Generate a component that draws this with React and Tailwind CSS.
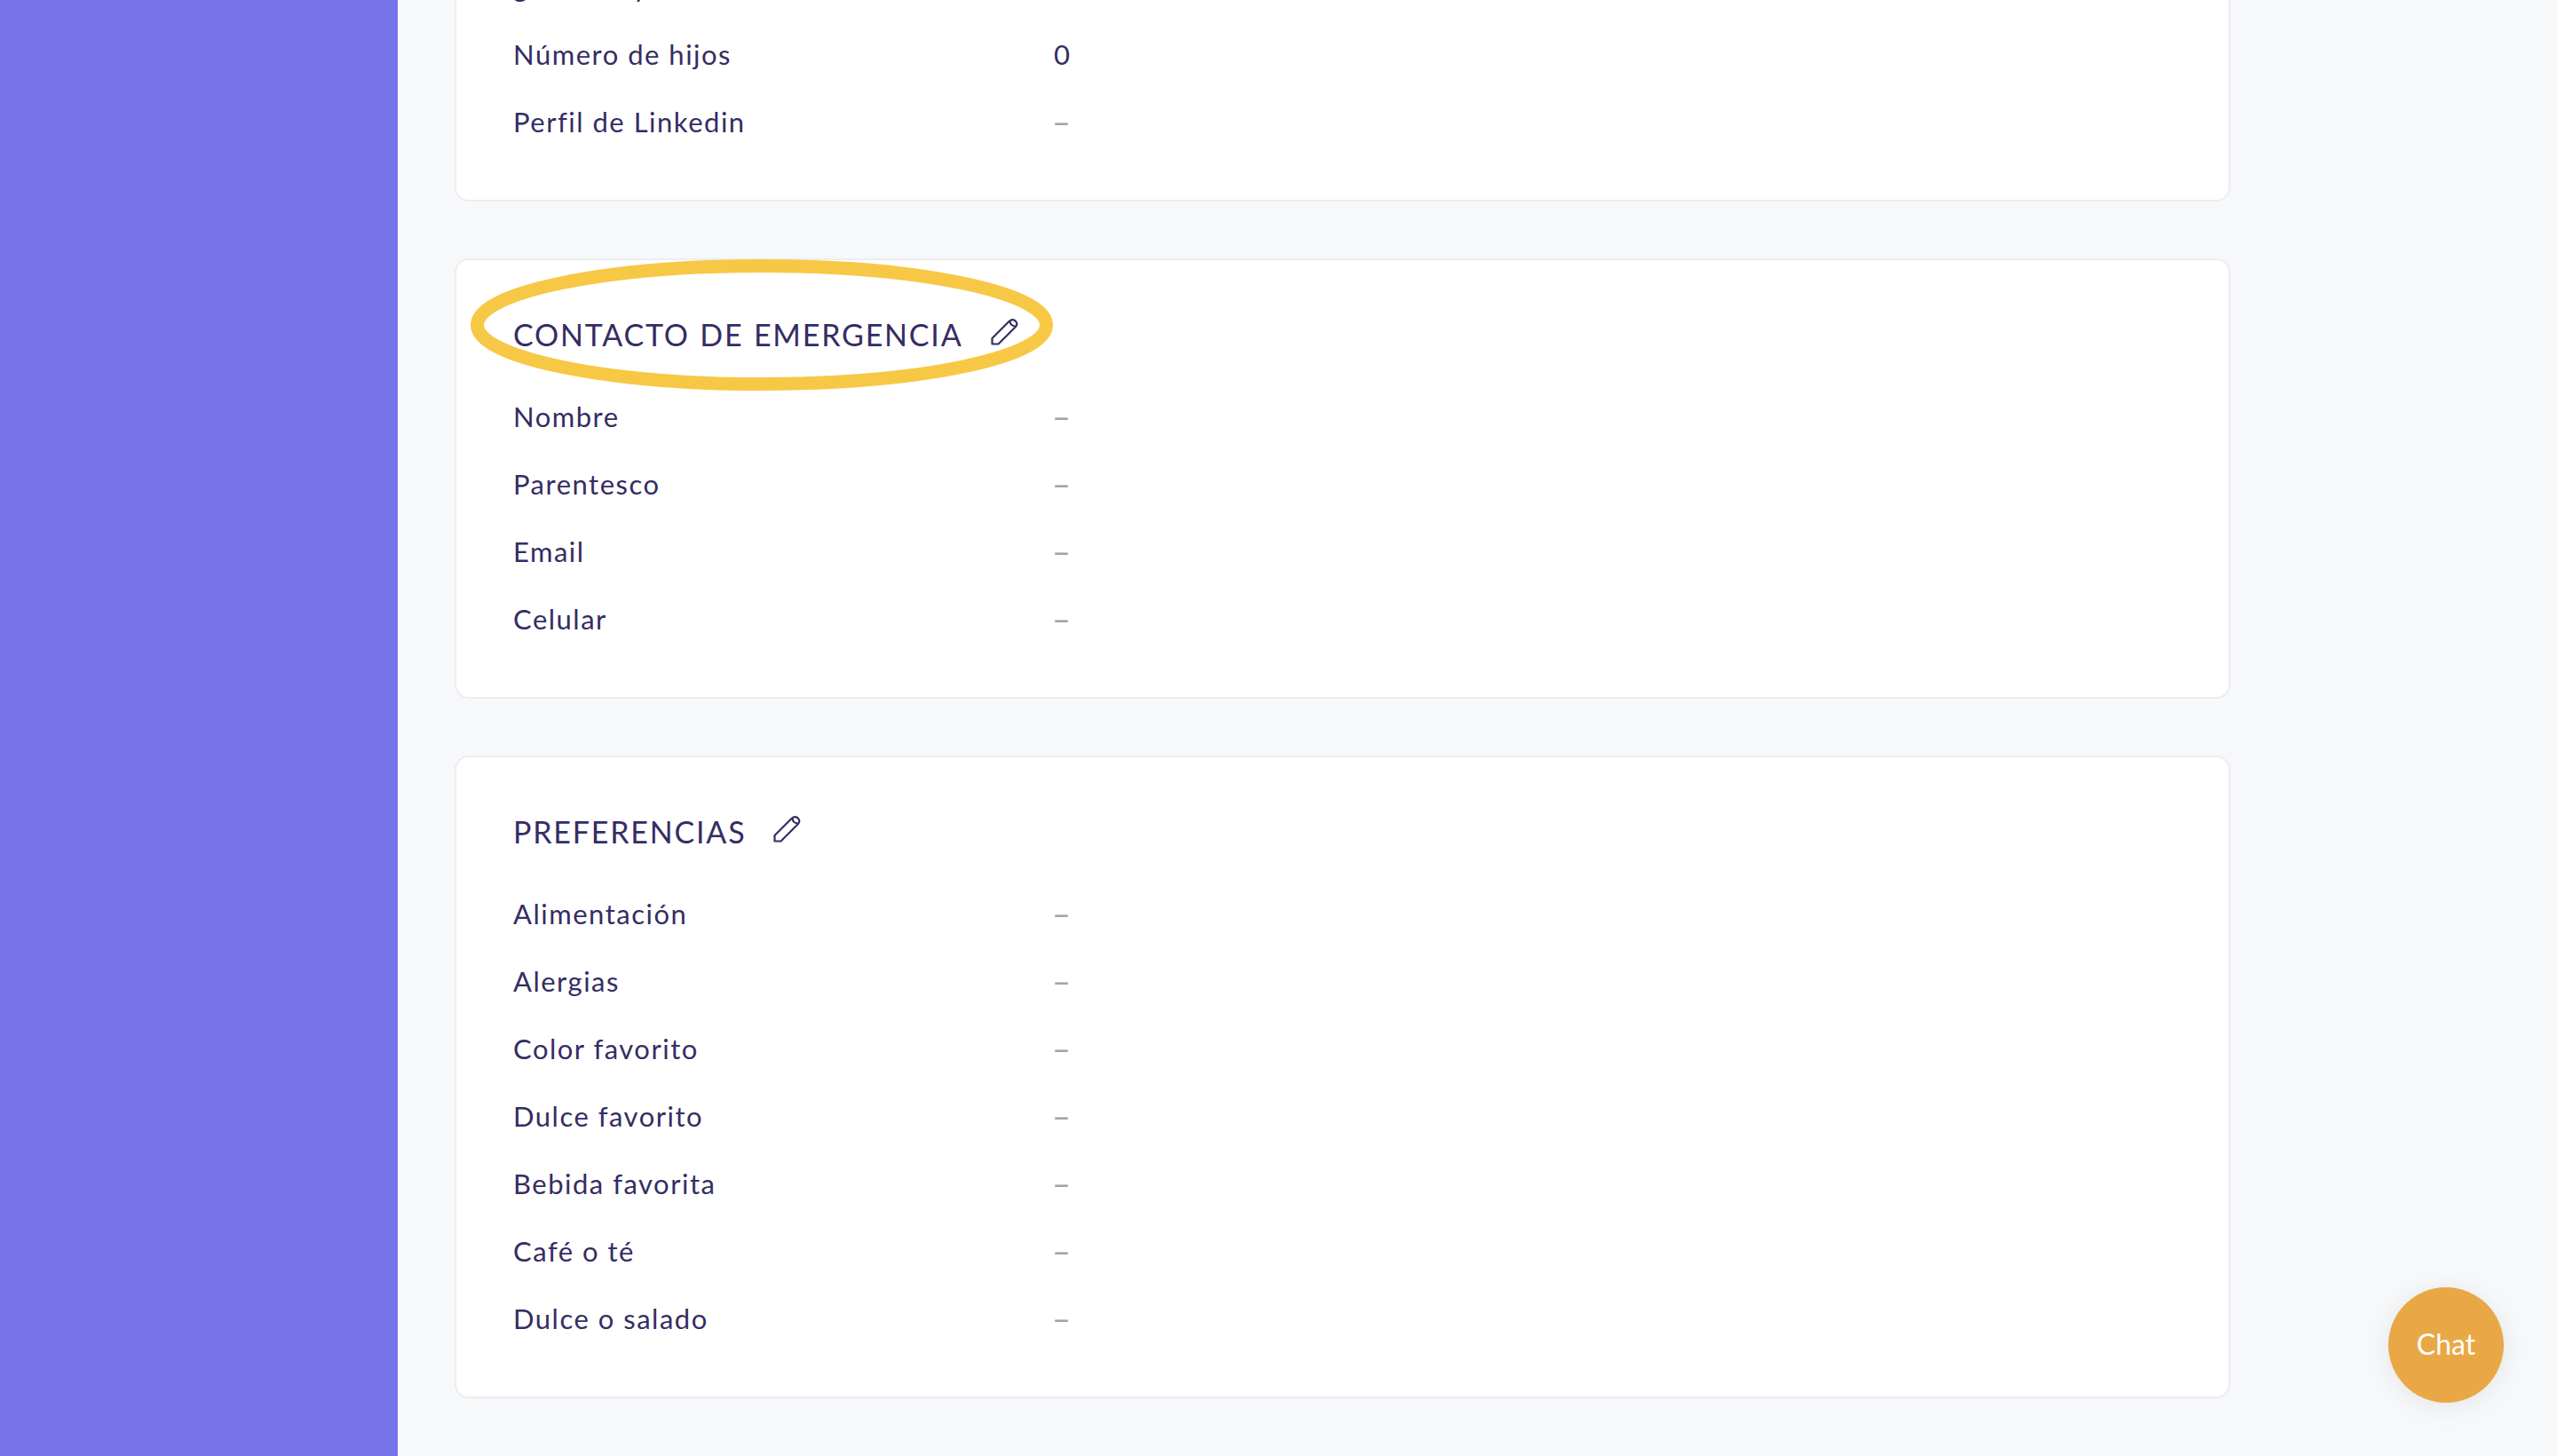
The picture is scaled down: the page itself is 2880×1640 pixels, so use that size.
const emergencia = ["Nombre", "Parentesco", "Email", "Celular"];
const preferencias = [
  "Alimentación",
  "Alergias",
  "Color favorito",
  "Dulce favorito",
  "Bebida favorita",
  "Café o té",
  "Dulce o salado",
];

function PencilIcon() {
  return (
    <svg viewBox="0 0 32 32" fill="none" stroke="#352d63" strokeWidth="2.2" strokeLinejoin="round" className="w-[32px] h-[32px] shrink-0 mb-[5px]">
      <path d="M2.5 23 L21.5 4 Q25 1 28 3 L29.5 4.5 Q31.5 7.5 28.5 10.5 L9.5 29.5 L2.5 29.5 Z" />
      <path d="M22.5 4 Q23 9 28.5 9.5" />
    </svg>
  );
}

function Row({ label, value = "–" }) {
  const isDash = value === "–";
  return (
    <div className="flex h-[76px] items-center text-[31px] tracking-[1.5px] text-[#352d63]">
      <span className="w-[609px] shrink-0">{label}</span>
      <span className={isDash ? "text-[36px] leading-none text-[#a3a3a8] -ml-[2px]" : "text-[#352d63]"}>{value}</span>
    </div>
  );
}

function SectionHeading({ children }) {
  return (
    <div className="flex h-[56px] mt-[55px] mb-[27px] items-center gap-[30px]">
      <h2 className="text-[34px] font-normal tracking-[1.8px] text-[#352d63] [word-spacing:1px]">{children}</h2>
      <PencilIcon />
    </div>
  );
}

function Card({ children }) {
  return (
    <section className="relative w-[2000px] rounded-[16px] border-2 border-[#ecedf1] bg-white px-[64px] pb-[50px]">
      {children}
    </section>
  );
}

export default function App() {
  return (
    <div className="flex h-[1640px] overflow-hidden bg-[#f7f8fa] font-['Lato',sans-serif]">
      <aside className="w-[448px] shrink-0 bg-[#7673ea]"></aside>

      <main className="flex-1 pl-[64px] flex flex-col gap-[64px] -mt-[54px]">
        <Card>
          {/* row cut off by the top of the screen */}
          <div className="flex h-[75px] items-center gap-[119px] text-[31px] text-[#352d63]">
            <span>g</span>
            <span>y</span>
          </div>
          <Row label="Número de hijos" value="0" />
          <Row label="Perfil de Linkedin" />
        </Card>

        <Card>
          <SectionHeading>CONTACTO DE EMERGENCIA</SectionHeading>
          {emergencia.map((label) => (
            <Row key={label} label={label} />
          ))}
          {/* highlight around the heading */}
          <svg viewBox="0 0 656 148" fill="none" className="absolute left-[16px] -top-[1px] w-[656px] h-[148px] pointer-events-none">
            <ellipse cx="328" cy="74" rx="320.5" ry="66.5" stroke="#f7c845" strokeWidth="15" />
          </svg>
        </Card>

        <Card>
          <SectionHeading>PREFERENCIAS</SectionHeading>
          {preferencias.map((label) => (
            <Row key={label} label={label} />
          ))}
        </Card>
      </main>

      <button className="absolute left-[2690px] top-[1450px] w-[130px] h-[130px] pb-[3px] rounded-full bg-[#e9a845] text-white text-[32px] shadow-[0_4px_30px_rgba(0,0,0,0.08)]">
        Chat
      </button>
    </div>
  );
}
